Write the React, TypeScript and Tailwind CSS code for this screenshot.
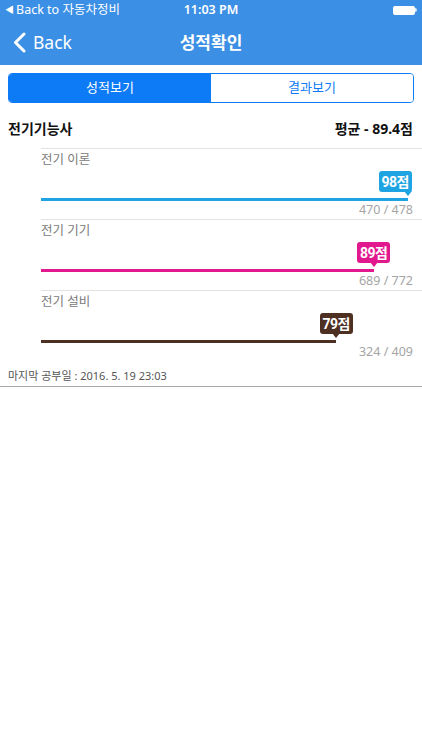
import React from "react";

const subjects = [
  { name: "전기 이론", score: 98, got: 470, total: 478, color: "#1ea4e2" },
  { name: "전기 기기", score: 89, got: 689, total: 772, color: "#e2198e" },
  { name: "전기 설비", score: 79, got: 324, total: 409, color: "#4e3023" },
];

const TRACK = 373;
const BADGE_W = 33;

function ScoreRow({ s }: { s: (typeof subjects)[number] }) {
  const end = (s.got / s.total) * TRACK;
  const left = Math.min(Math.max(end - BADGE_W / 2, 0), TRACK - BADGE_W - 2);
  const tail = Math.min(Math.max(end - left, 5), BADGE_W - 3);
  return (
    <div className="ml-[41px] h-[71px] border-t border-[#e2e2e2]">
      <div className="mt-[3px] h-4 text-[12.5px] leading-4 text-[#7a7a7a]">{s.name}</div>
      <div className="relative mt-[3px] h-[30px] w-[373px]">
        <div
          className="absolute top-0 flex h-[21px] items-center justify-center rounded-[3px] text-[14px] font-bold leading-none text-white"
          style={{ left, width: BADGE_W, backgroundColor: s.color }}
        >
          <span className="font-['Roboto','Noto_Sans_CJK_KR',sans-serif] tracking-[-0.5px]">{s.score}</span>
          <span>점</span>
          <span
            className="absolute top-[20px] h-0 w-0 border-x-[4px] border-t-[5px] border-x-transparent"
            style={{ left: tail - 4, borderTopColor: s.color }}
          />
        </div>
        <div className="absolute bottom-0 left-0 h-[3px]" style={{ width: end, backgroundColor: s.color }} />
      </div>
      <div className="mt-[1px] pr-[9px] text-right text-[12.5px] leading-4 text-[#a5a5a5]">
        {s.got} / {s.total}
      </div>
    </div>
  );
}

export default function App() {
  return (
    <div className="min-h-[750px] w-[422px] bg-white font-['Noto_Sans','Noto_Sans_CJK_KR',sans-serif]">
      <div className="bg-[#3b8fe4] text-white">
        <div className="relative flex h-5 items-center px-[5px] text-[12.5px]">
          <span className="flex items-center gap-[2px]">
            <span className="text-[9px]">◀</span>Back to 자동차정비
          </span>
          <span className="absolute left-1/2 -translate-x-1/2 font-semibold">11:03 PM</span>
          <span className="ml-auto flex items-center">
            <span className="h-[9px] w-[22px] rounded-[2px] bg-white" />
            <span className="h-[4px] w-[2px] rounded-r-sm bg-white/80" />
          </span>
        </div>
        <div className="relative flex h-[45px] items-center px-[13px]">
          <svg width="13" height="21" viewBox="0 0 13 21" fill="none">
            <path d="M11 2L2.5 10.5L11 19" stroke="white" strokeWidth="3" strokeLinecap="round" strokeLinejoin="round" />
          </svg>
          <span className="ml-[7px] text-[17.5px] leading-none">Back</span>
          <span className="absolute left-1/2 -translate-x-1/2 text-[17px] font-semibold">성적확인</span>
        </div>
      </div>

      <div className="px-2 pt-2">
        <div className="flex h-[30px] overflow-hidden rounded-[4px] border border-[#0c7bf5] text-[13px]">
          <div className="flex flex-1 items-center justify-center bg-[#0c7bf5] text-white">성적보기</div>
          <div className="flex flex-1 items-center justify-center bg-white text-[#0c7bf5]">결과보기</div>
        </div>
      </div>

      <div className="flex h-[45px] items-start justify-between pl-[8px] pr-[9px] pt-[16px] text-[14px] font-bold leading-5 text-[#111]">
        <span>전기기능사</span>
        <span>평균 - 89.4점</span>
      </div>

      {subjects.map((s) => (
        <ScoreRow key={s.name} s={s} />
      ))}

      <div className="border-b border-[#a8a8a8] pb-[3px] pl-2 pt-[8px] text-[11px] leading-[14px] text-[#555]">
        마지막 공부일 : 2016. 5. 19 23:03
      </div>
    </div>
  );
}
